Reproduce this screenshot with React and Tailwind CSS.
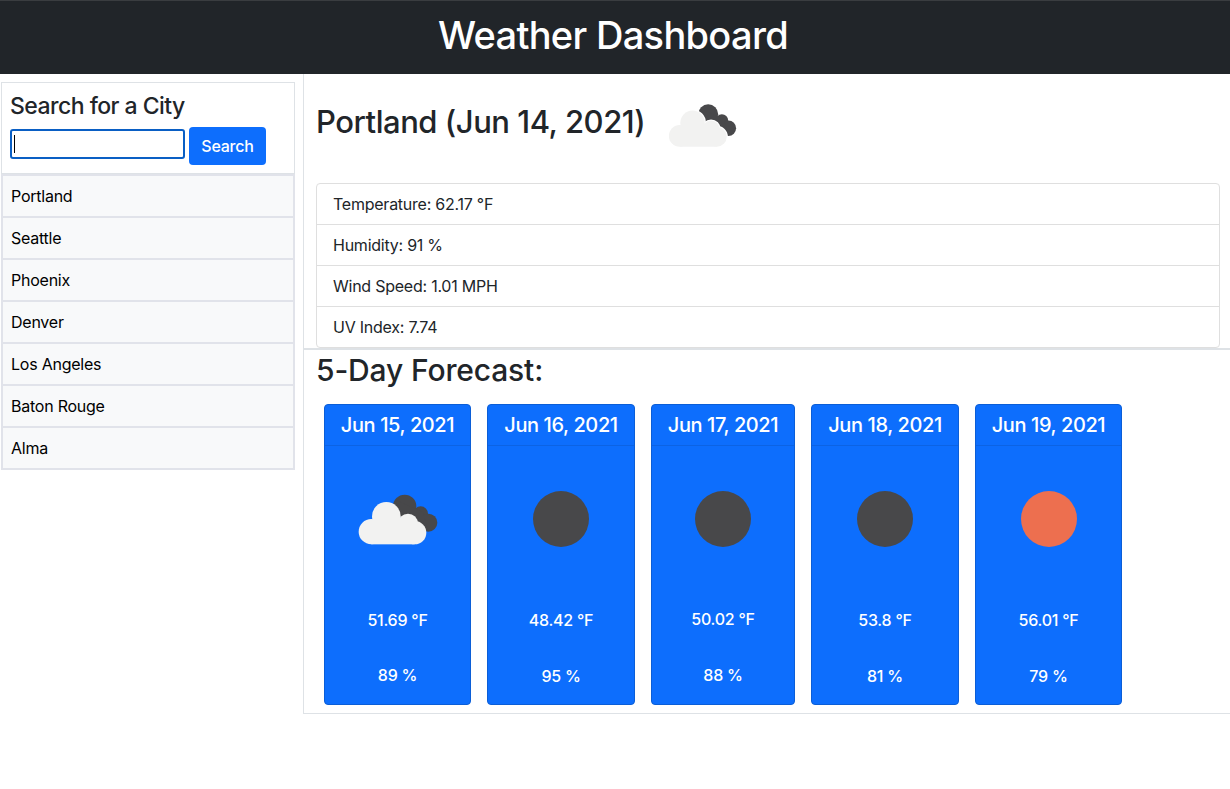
const cities = ["Portland", "Seattle", "Phoenix", "Denver", "Los Angeles", "Baton Rouge", "Alma"];

const forecast = [
  { date: "Jun 15, 2021", icon: "clouds", temp: "51.69 °F", humidity: "89 %", width: "w-[147px]", tempRow: "h-[71px] pt-[16px]" },
  { date: "Jun 16, 2021", icon: "dark", temp: "48.42 °F", humidity: "95 %", width: "w-[148px]", tempRow: "h-[72px] pt-[16px]" },
  { date: "Jun 17, 2021", icon: "dark", temp: "50.02 °F", humidity: "88 %", width: "w-[144px]", tempRow: "h-[71px] pt-[15px]" },
  { date: "Jun 18, 2021", icon: "dark", temp: "53.8 °F", humidity: "81 %", width: "w-[148px]", tempRow: "h-[72px] pt-[16px]" },
  { date: "Jun 19, 2021", icon: "sun", temp: "56.01 °F", humidity: "79 %", width: "w-[147px]", tempRow: "h-[72px] pt-[16px]" },
];

function CloudShape(props) {
  return (
    <g {...props}>
      <circle cx="95" cy="154" r="38" />
      <circle cx="140" cy="108" r="43" />
      <circle cx="205" cy="130" r="30" />
      <circle cx="225" cy="157" r="35" />
      <rect x="95" y="125" width="130" height="67" />
    </g>
  );
}

function CloudIcon({ className, halo }) {
  return (
    <svg viewBox="50 35 250 165" className={className}>
      <g fill="#48484a">
        <circle cx="195" cy="78" r="35" />
        <circle cx="243" cy="100" r="22" />
        <circle cx="266" cy="127" r="27" />
        <path d="M170 60 L250 95 L265 150 L200 150 Z" />
      </g>
      {halo && <CloudShape fill="#ffffff" stroke="#ffffff" strokeWidth="8" />}
      <CloudShape fill="#f2f2f1" />
    </svg>
  );
}

function ForecastCard({ day }) {
  return (
    <div className={`${day.width} h-[301px] bg-[#0d6efd] border border-[#0b5ed7] rounded text-white text-center font-medium`}>
      <div className="h-[41px] border-b border-[#0c63e4] flex items-center justify-center text-[20px] tracking-[-0.02em]">
        {day.date}
      </div>
      <div className="h-[146px] flex items-center justify-center">
        {day.icon === "clouds" && <CloudIcon className="w-[84px] h-[55px]" />}
        {day.icon === "dark" && <div className="w-14 h-14 rounded-full bg-[#48484a]" />}
        {day.icon === "sun" && <div className="w-14 h-14 rounded-full bg-[#ed6f4f]" />}
      </div>
      <p className={day.tempRow}>{day.temp}</p>
      <p>{day.humidity}</p>
    </div>
  );
}

export default function App() {
  return (
    <div className="min-h-[789px] bg-white text-[#212529] font-['Inter',sans-serif] tracking-[-0.015em]">
      {/* Header */}
      <header className="h-[74px] bg-[#212529] border-t border-[#3a3d40] flex items-center justify-center pb-[5px] pr-[4px]">
        <h1 className="text-[38px] font-medium text-white tracking-[-0.018em]">Weather Dashboard</h1>
      </header>

      <div className="flex">
        {/* Sidebar */}
        <aside className="w-[303px] shrink-0 pt-2 pl-px pr-2">
          <div className="h-[92px] border border-[#dee2e6] px-2 pt-[9px]">
            <h2 className="text-[23px] font-medium leading-[29px] tracking-[-0.023em]">Search for a City</h2>
            <div className="flex items-start gap-1 mt-[6px]">
              <div className="w-[175px] h-[30px] mt-[2px] border-2 border-[#0a5fc4] rounded-[3px] flex items-center pl-[2px]">
                <div className="w-px h-[18px] bg-black" />
              </div>
              <button className="w-[77px] h-[38px] bg-[#0d6efd] rounded text-white font-medium">Search</button>
            </div>
          </div>
          <ul className="text-black border-t-2 border-[#e1e3ea]">
            {cities.map((city) => (
              <li
                key={city}
                className="h-[42px] border-x-2 border-b-2 border-[#e1e3ea] bg-[#f8f9fa] flex items-center pl-2"
              >
                {city}
              </li>
            ))}
          </ul>
        </aside>

        {/* Main */}
        <main className="flex-1 h-[640px] border-l border-b border-[#dee2e6]">
          <div className="h-[109px] pl-3 pr-2 flex items-start">
            <h2 className="text-[31px] font-medium leading-[38px] mt-[29px] tracking-[-0.015em]">Portland (Jun 14, 2021)</h2>
            <CloudIcon halo className="w-[73px] h-[47px] ml-[21px] mt-[28px]" />
          </div>

          <div className="mx-3 mr-[10px] border border-[#dfdfdf] rounded">
            <div className="h-[41px] px-4 flex items-center border-b border-[#dfdfdf]">Temperature: 62.17 °F</div>
            <div className="h-[41px] px-4 flex items-center border-b border-[#dfdfdf]">Humidity: 91 %</div>
            <div className="h-[41px] px-4 flex items-center border-b border-[#dfdfdf]">Wind Speed: 1.01 MPH</div>
            <div className="h-[40px] px-4 flex items-center">UV Index: 7.74</div>
          </div>

          <div className="border-t-2 border-[#dee2e6] pl-3">
            <h3 className="text-[30px] font-medium leading-[34px] mt-[3px] tracking-[-0.005em]">5-Day Forecast:</h3>
            <div className="flex gap-4 mt-[17px] ml-2">
              {forecast.map((day) => (
                <ForecastCard key={day.date} day={day} />
              ))}
            </div>
          </div>
        </main>
      </div>
    </div>
  );
}
